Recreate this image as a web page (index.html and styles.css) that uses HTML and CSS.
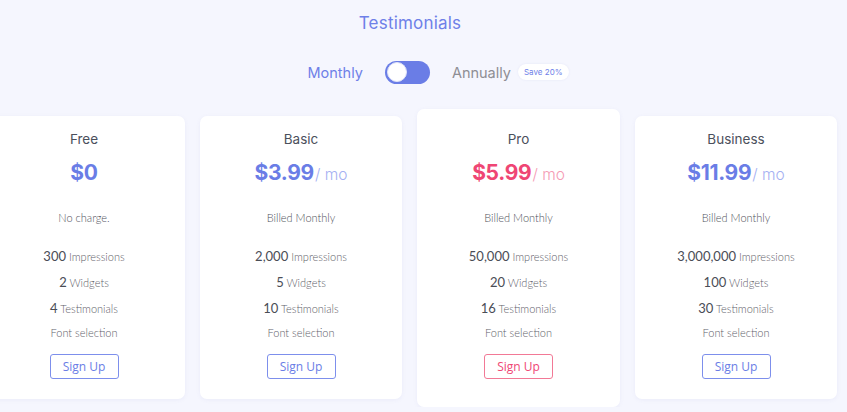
FILE: index.html
```html
<!DOCTYPE html>
<html>
<head>
<meta charset="utf-8">
<link rel="stylesheet" href="styles.css">
</head>
<body>
<div class="page">
  <h1 class="title">Testimonials</h1>
  <div class="toggle-row">
    <span class="period active">Monthly</span>
    <span class="switch"><span class="knob"></span></span>
    <span class="period">Annually</span>
    <span class="badge">Save 20%</span>
  </div>
  <div class="plans">
    <div class="card">
      <div class="plan-name">Free</div>
      <div class="price"><span class="amount">$0</span></div>
      <div class="billing">No charge.</div>
      <ul class="features">
        <li><span class="num">300</span> Impressions</li>
        <li><span class="num">2</span> Widgets</li>
        <li><span class="num">4</span> Testimonials</li>
        <li class="font-sel">Font selection</li>
      </ul>
      <button class="signup">Sign Up</button>
    </div>
    <div class="card">
      <div class="plan-name">Basic</div>
      <div class="price"><span class="amount">$3.99</span><span class="per">/ mo</span></div>
      <div class="billing">Billed Monthly</div>
      <ul class="features">
        <li><span class="num">2,000</span> Impressions</li>
        <li><span class="num">5</span> Widgets</li>
        <li><span class="num">10</span> Testimonials</li>
        <li class="font-sel">Font selection</li>
      </ul>
      <button class="signup">Sign Up</button>
    </div>
    <div class="card featured">
      <div class="plan-name">Pro</div>
      <div class="price"><span class="amount">$5.99</span><span class="per">/ mo</span></div>
      <div class="billing">Billed Monthly</div>
      <ul class="features">
        <li><span class="num">50,000</span> Impressions</li>
        <li><span class="num">20</span> Widgets</li>
        <li><span class="num">16</span> Testimonials</li>
        <li class="font-sel">Font selection</li>
      </ul>
      <button class="signup">Sign Up</button>
    </div>
    <div class="card">
      <div class="plan-name">Business</div>
      <div class="price"><span class="amount">$11.99</span><span class="per">/ mo</span></div>
      <div class="billing">Billed Monthly</div>
      <ul class="features">
        <li><span class="num">3,000,000</span> Impressions</li>
        <li><span class="num">100</span> Widgets</li>
        <li><span class="num">30</span> Testimonials</li>
        <li class="font-sel">Font selection</li>
      </ul>
      <button class="signup">Sign Up</button>
    </div>
  </div>
</div>
</body>
</html>
```
FILE: styles.css
```css
* { box-sizing: border-box; }
html, body {
  margin: 0;
  padding: 0;
  background: #f5f6fe;
  overflow: hidden;
}
body {
  font-family: "Lato", "Noto Sans", sans-serif;
  color: #444;
}
.page {
  width: 854px;
  margin-left: -17px;
  padding-top: 11px;
  display: flex;
  flex-direction: column;
  align-items: center;
}
.title {
  margin: 0;
  font-family: "Inter", "Lato", sans-serif;
  font-weight: 400;
  font-size: 17px;
  line-height: 24px;
  color: #6e80e8;
  letter-spacing: 0.2px;
}
.toggle-row {
  margin-top: 25px;
  display: flex;
  align-items: center;
  height: 24px;
  margin-left: 56px;
}
.period {
  font-family: "Inter", "Lato", sans-serif;
  font-size: 14.5px;
  color: #8e8e94;
}
.period.active {
  color: #6e80e8;
}
.switch {
  width: 45px;
  height: 23px;
  border-radius: 12px;
  background: #6a7de6;
  margin: 0 22px;
  display: flex;
  align-items: center;
  padding: 0 2px;
}
.knob {
  width: 20px;
  height: 20px;
  border-radius: 50%;
  background: #fff;
  border: 1px solid #dfe3f8;
}
.badge {
  margin-left: 7px;
  background: #fff;
  border-radius: 9px;
  font-family: "Inter", "Lato", sans-serif;
  font-size: 8px;
  line-height: 16px;
  padding: 0 6px;
  color: #6e80e8;
  box-shadow: 0 0 2px rgba(120, 130, 200, 0.15);
}
.plans {
  margin-top: 32px;
  display: flex;
  gap: 15px;
  align-items: flex-start;
}
.card {
  width: 202px;
  background: #fff;
  border-radius: 7px;
  box-shadow: 0 1px 4px rgba(110, 120, 190, 0.08);
  padding: 13px 0 20px;
  display: flex;
  flex-direction: column;
  align-items: center;
}
.card.featured {
  margin-top: -7px;
  padding-top: 20px;
  padding-bottom: 28px;
  width: 203px;
}
.plan-name {
  font-family: "Inter", "Lato", sans-serif;
  font-size: 13.5px;
  line-height: 20px;
  color: #4b505c;
}
.price {
  margin-top: 9px;
  height: 30px;
  display: flex;
  align-items: baseline;
  line-height: 30px;
}
.amount {
  font-family: "Inter", "Lato", sans-serif;
  font-weight: 700;
  font-size: 21px;
  letter-spacing: -0.3px;
  color: #6a7de6;
}
.per {
  font-family: "Inter", "Lato", sans-serif;
  font-weight: 300;
  font-size: 15.5px;
  color: #a4b0f2;
  margin-left: 1px;
}
.featured .amount { color: #ef4674; }
.featured .per { color: #f59bb4; }
.billing {
  margin-top: 22px;
  font-size: 11px;
  font-weight: 300;
  line-height: 16px;
  color: #4f525b;
}
.features {
  list-style: none;
  margin: 18px 0 0;
  padding: 0;
  text-align: center;
}
.features li {
  height: 26px;
  font-size: 11px;
  font-weight: 300;
  line-height: 26px;
  color: #5f626b;
}
.features .num {
  font-size: 13px;
  font-weight: 400;
  line-height: 1;
  color: #4a4d56;
}
.features .font-sel {
  height: 22px;
  line-height: 22px;
}
.signup {
  margin-top: 10px;
  width: 69px;
  height: 25px;
  background: #fff;
  border: 1px solid #7d8fec;
  border-radius: 3px;
  font-family: "Open Sans", "Lato", sans-serif;
  font-size: 12px;
  color: #6a7de6;
  padding: 0;
  cursor: pointer;
}
.featured .signup {
  border-color: #f27996;
  color: #ef4674;
}
```
